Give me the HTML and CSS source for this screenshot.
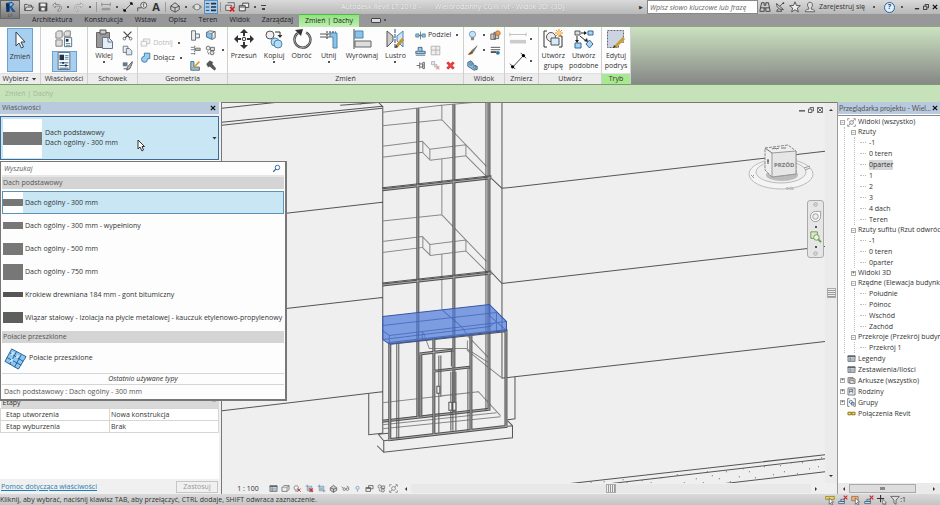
FILE: index.html
```html
<!DOCTYPE html>
<html lang="pl">
<head>
    <meta charset="UTF-8">
    <meta name="viewport" content="width=device-width, initial-scale=1.0">
    <title>Autodesk Revit LT 2018</title>
    <link rel="stylesheet" href="styles.css">
</head>
<body>
    <!-- Icon sheet -->
    <svg class="sheet" aria-hidden="true">
        <symbol id="i-open" viewBox="0 0 14 14"><path d="M2 11V4h3l1 1h4v2M2 11l2-4h8l-2 4z" fill="#ddd" stroke="#444"/></symbol>
        <symbol id="i-save" viewBox="0 0 14 14"><path d="M2.500 2.500h9v9h-9z" fill="#555" stroke="#333"/><path d="M4 3h6v3H4zM5 8h4v3H5z" fill="#eee"/></symbol>
        <symbol id="i-undo" viewBox="0 0 14 14"><path d="M5 2L2 5l3 3V6h4c2 0 2 4-1 4v2c6 0 5-8 0-8H5z" fill="#ddd" stroke="#666" stroke-width=".8"/></symbol>
        <symbol id="i-redo" viewBox="0 0 14 14"><path d="M9 2l3 3-3 3V6H5c-2 0-2 4 1 4v2C0 12 1 4 6 4h3z" fill="#ddd" stroke="#999" stroke-width=".8"/></symbol>
        <symbol id="i-meas" viewBox="0 0 14 14"><path d="M2 4h10M2 2v4M12 2v4" stroke="#888" fill="none"/><path d="M2 8h10v3H2z" fill="#999"/></symbol>
        <symbol id="i-dim" viewBox="0 0 14 14"><path d="M3 11l8-8M1 9l4 4M9 1l4 4" stroke="#444" fill="none"/><circle cx="3" cy="11" r="1.500"/><circle cx="11" cy="3" r="1.500"/></symbol>
        <symbol id="i-tag" viewBox="0 0 14 14"><circle cx="9" cy="5" r="3.500" fill="#eee" stroke="#444"/><path d="M8 4l1-1v4M2 12V8h4" stroke="#444" fill="none"/></symbol>
        <symbol id="i-cube" viewBox="0 0 14 14"><path d="M2 6l5-4 5 4v4l-5 3-5-3z" fill="#ccc" stroke="#444"/><path d="M2 6l5 2 5-2M7 8v5" stroke="#444" fill="none"/></symbol>
        <symbol id="i-sect" viewBox="0 0 14 14"><path d="M1 7l3-3v6zM13 7l-3-3v6z" fill="#888"/><circle cx="7" cy="7" r="3.500" fill="#ddd" stroke="#777"/></symbol>
        <symbol id="i-thin" viewBox="0 0 14 14"><path d="M1 3h4M1 7h4M1 11h4" stroke="#234" fill="none"/><path d="M7 3h6M7 7h6M7 11h6" stroke="#234" stroke-width="2"/></symbol>
        <symbol id="i-closeh" viewBox="0 0 14 14"><path d="M4 2h8v6M2 5h7v6H2z" fill="#ddd" stroke="#555"/><path d="M7 7l5 5M12 7l-5 5" stroke="#d22" stroke-width="2"/></symbol>
        <symbol id="i-switch" viewBox="0 0 14 14"><path d="M5.500 2.500h7v5h-7z" fill="#eee" stroke="#333"/><path d="M1.500 5.500h7v6h-7z" fill="#eee" stroke="#333"/><path d="M2 7h6" stroke="#333"/></symbol>
        <symbol id="i-bino" viewBox="0 0 14 14"><path d="M3 2h3v3h2V2h3l2 10H8V8H6v4H1z" fill="#ccc" stroke="#333"/><path d="M2 8h4M8 8h4" stroke="#333"/></symbol>
        <symbol id="i-dish" viewBox="0 0 14 14"><path d="M3 3c0 5 3 7 8 7M3 3l8 7M7 6l4-4M5 9l-2 3h6l-1-2" fill="none" stroke="#444"/><circle cx="11" cy="2.500" r="1" fill="#444"/></symbol>
        <symbol id="i-star" viewBox="0 0 14 14"><path d="M7 1l1.700 4.200 4.500.300-3.500 2.800 1.200 4.400L7 10.200l-3.900 2.500 1.200-4.400L.800 5.500l4.500-.300z" fill="#eee" stroke="#444"/></symbol>
        <symbol id="i-user" viewBox="0 0 14 14"><path d="M1.500 12.500c0-2 2-3 4-3V8C3 5 4 1.500 7 1.500S11 5 8.500 8v1.500c2 0 4 1 4 3z" fill="#ddd" stroke="#555"/></symbol>
        <symbol id="i-x" viewBox="0 0 7 7"><path d="M1 1l5 5M6 1L1 6" stroke="#111" stroke-width="1.500"/></symbol>
        <symbol id="i-arrow" viewBox="0 0 20 20"><path d="M6 2v14l3-3 2.500 5 2-1-2.500-5h4z" fill="#fff" stroke="#345"/></symbol>
        <symbol id="i-types" viewBox="0 0 20 20"><path d="M1 3l2-2h5v7l-1 1H1zM10 3l2-2h5v6h-7zM1 11h7v7H1z" fill="#ddd" stroke="#777"/><path d="M10.500 8.500h8v10h-8z" fill="#fff" stroke="#567"/><path d="M12 10h3v3h-3z" fill="#234"/><path d="M12 15h5M12 17h5" stroke="#48a"/></symbol>
        <symbol id="i-props" viewBox="0 0 20 20"><path d="M3.500.500h13v19h-13z" fill="#f6fafd" stroke="#567"/><path d="M5 3h5v6H5z" fill="#234"/><path d="M11 4h4M11 6h4M11 8h4" stroke="#48a"/><path d="M5 12h10M5 15h10M5 18h10" stroke="#357"/><path d="M8 11h2v2H8zM11 14h2v2h-2z" fill="#135"/></symbol>
        <symbol id="i-paste" viewBox="0 0 20 20"><path d="M2.500 3.500h13v15h-13z" fill="#999" stroke="#666"/><path d="M6 1h6v4H6z" fill="#ccc" stroke="#555"/><path d="M8.500 8.500h6l4 4v7h-10z" fill="#e6eef5" stroke="#678"/><path d="M14 9v4h4" fill="none" stroke="#678"/></symbol>
        <symbol id="i-cut" viewBox="0 0 14 14"><path d="M2 2l8 8M12 2L4 10" stroke="#444" stroke-width="1.500"/><circle cx="3" cy="11" r="1.700" fill="none" stroke="#555"/><circle cx="11" cy="11" r="1.700" fill="none" stroke="#555"/></symbol>
        <symbol id="i-copy" viewBox="0 0 14 14"><path d="M1.500 1.500h6v8h-6z" fill="#eee" stroke="#567"/><path d="M5.500 4.500h4l3 3v5h-7z" fill="#dde7f0" stroke="#567"/></symbol>
        <symbol id="i-match" viewBox="0 0 14 14"><path d="M1 3h6v5H1z" fill="#678"/><path d="M2 10h6v2H2z" fill="#89a"/><path d="M13 2L7 9l-1 4 4-2 3-7z" fill="#bbb" stroke="#444"/></symbol>
        <symbol id="i-cope" viewBox="0 0 14 14"><path d="M4.500 2.500h8v6h-8z" fill="#f3f3f3" stroke="#bbb"/><path d="M1.500 5.500h7v6h-7z" fill="#f8f8f8" stroke="#bbb"/></symbol>
        <symbol id="i-join" viewBox="0 0 14 14"><path d="M5.500 1.500v4a3.800 3.800 0 1 0 4 4v-1h3v-7z" fill="#9dccee" stroke="#256a9c"/></symbol>
        <symbol id="i-geo1" viewBox="0 0 14 14"><path d="M2 1h5v4h5v5H7v3H2z" fill="#eee" stroke="#456"/><path d="M7 5v5" stroke="#456"/></symbol>
        <symbol id="i-geo2" viewBox="0 0 14 14"><path d="M2 3l7 1v8l-7-3z" fill="#8ac0e4" stroke="#357"/><path d="M2 3l4-2 7 1-4 2M13 2v8l-4 2" fill="#ddd" stroke="#555"/></symbol>
        <symbol id="i-geo3" viewBox="0 0 14 14"><path d="M1 3h5M1 6h5M1 11h5" stroke="#567"/><path d="M6 1v12" stroke="#345" stroke-dasharray="2 1"/><path d="M7 4h6v3H7z" fill="#bbb" stroke="#666"/></symbol>
        <symbol id="i-geo4" viewBox="0 0 14 14"><circle cx="4" cy="4" r="2.500" fill="#eee" stroke="#555"/><path d="M7 3h5v4H7z" fill="#ddd" stroke="#555"/><circle cx="9" cy="10" r="2.500" fill="#ddd" stroke="#555"/><path d="M3 8l2 4" stroke="#555"/></symbol>
        <symbol id="i-geo5" viewBox="0 0 14 14"><path d="M1 2v11h11V9H5V2z" fill="#9cd" stroke="#357"/><path d="M6 8l6-6" stroke="#d99a22" stroke-width="2"/><path d="M1 10h11" stroke="#c84"/></symbol>
        <symbol id="i-hammer" viewBox="0 0 14 14"><path d="M2 5l4-4 4 2-1 2 5 6-2 2-6-5-2 1z" fill="#555" stroke="#333" stroke-width=".5"/></symbol>
        <symbol id="i-move" viewBox="0 0 20 20"><path d="M10 0l4 4H6zM10 20l4-4H6zM0 10l4-4v8zM20 10l-4-4v8z" fill="#333"/><path d="M9 4h2v3H9zM9 13h2v3H9zM4 9h3v2H4zM13 9h3v2h-3z" fill="#333"/><circle cx="10" cy="10" r="1.800" fill="#eee" stroke="#333"/></symbol>
        <symbol id="i-copy2" viewBox="0 0 20 20"><circle cx="6" cy="6" r="4" fill="#eee" stroke="#555"/><circle cx="11" cy="13" r="4" fill="#b6dcf5" stroke="#4a86b0"/><circle cx="14" cy="15" r="4" fill="#b6dcf5" stroke="#4a86b0"/><path d="M11 3h5v4" fill="none" stroke="#333"/><path d="M13.500 6h5L16 9z" fill="#333"/></symbol>
        <symbol id="i-rot" viewBox="0 0 20 20"><path d="M6 4a8 8 0 1 0 8-.500" fill="none" stroke="#444" stroke-width="2.400"/><path d="M6 4a8 8 0 1 0 8-.500" fill="none" stroke="#bbb" stroke-width=".8"/><path d="M3 1l8-1-2 7z" fill="#333"/></symbol>
        <symbol id="i-trim" viewBox="0 0 20 20"><path d="M1 5h10M1 8h10" stroke="#555"/><path d="M11 4h7v15h-4V8h-3z" fill="#8cc3e8" stroke="#4a86b0"/><path d="M8 2v8M10 3h7" stroke="#333" stroke-dasharray="2 1"/></symbol>
        <symbol id="i-align" viewBox="0 0 20 20"><path d="M2 0v20" stroke="#444"/><path d="M3 2h8v7H3z" fill="#8cc3e8" stroke="#4a86b0"/><path d="M3 12h16v6H3z" fill="#ddd" stroke="#666"/></symbol>
        <symbol id="i-mirror" viewBox="0 0 20 20"><path d="M2 2l6 5v5l-6 6z" fill="#ccc" stroke="#555"/><path d="M18 2l-6 5v5l6 6z" fill="#cde7f7" stroke="#4a86b0"/><path d="M10 0v20" stroke="#248" stroke-dasharray="4 1"/><path d="M11 18l7-8" stroke="#c9922c" stroke-width="3"/><path d="M10 19l1-3 2 2z" fill="#333"/></symbol>
        <symbol id="i-split" viewBox="0 0 14 14"><path d="M1 5h4v4H1zM9 5h4v4H9z" fill="#8cc3e8" stroke="#4a7c9c"/><path d="M7 2v10M5 7h4" stroke="#567"/></symbol>
        <symbol id="i-offset" viewBox="0 0 14 14"><path d="M1 11V8h3V3h5v5h4v3z" fill="#9cc8e6" stroke="#357"/><path d="M5 8h4M1 13h12" stroke="#357"/></symbol>
        <symbol id="i-scale" viewBox="0 0 14 14"><path d="M1.500 1.500h11v11h-11z" fill="#eee" stroke="#aaa"/><path d="M1.500 6.500h6v6M7.500 1.500v5h5" fill="none" stroke="#aaa"/></symbol>
        <symbol id="i-pin" viewBox="0 0 14 14"><path d="M2 7h4M6 3v8M6 5h4v4H6M10 3h2v8h-2z" stroke="#555" fill="none"/></symbol>
        <symbol id="i-unpin" viewBox="0 0 14 14"><path d="M2 2h4v4H2zM6 6h3v3H6z" fill="#eee" stroke="#aaa"/><path d="M8 8l4 4M12 8l-4 4" stroke="#d9a0a0" stroke-width="1.500"/></symbol>
        <symbol id="i-del" viewBox="0 0 14 14"><path d="M3 3l8 8M11 3l-8 8" stroke="#b22" stroke-width="3.500"/><path d="M3 3l8 8M11 3l-8 8" stroke="#e44" stroke-width="2"/></symbol>
        <symbol id="i-bulb" viewBox="0 0 14 14"><circle cx="7" cy="5.500" r="4" fill="#c5e2f6" stroke="#5a8fb5"/><path d="M5 9h4v4H5z" fill="#888"/></symbol>
        <symbol id="i-boxes" viewBox="0 0 14 14"><path d="M1 5h6v7H1zM5 3h6v8H5z" fill="#ccc" stroke="#555"/><circle cx="10" cy="4" r="3" fill="#e8a05a" stroke="#b4622a"/></symbol>
        <symbol id="i-brush" viewBox="0 0 14 14"><path d="M13 1L6 7l2 2z" fill="#777" stroke="#444" stroke-width=".5"/><path d="M6 7L1 12c3 1 6 0 7-3z" fill="#8a5a20"/></symbol>
        <symbol id="i-lines" viewBox="0 0 14 14"><path d="M1 3h12M1 6h12" stroke="#333"/><path d="M1 9h7" stroke="#333" stroke-width="2"/><circle cx="10" cy="10" r="2.500" fill="#379"/></symbol>
        <symbol id="i-link" viewBox="0 0 14 14"><path d="M1 3l4-2 3 3v2l5 2v4l-4 1-8-5z" fill="#86b8dc" stroke="#357"/><circle cx="5" cy="5" r="1.500" fill="#eee" stroke="#357"/><circle cx="10" cy="9" r="1.500" fill="#eee" stroke="#357"/></symbol>
        <symbol id="i-ruler" viewBox="0 0 20 20"><path d="M1 5h18M1 3v4M19 3v4" stroke="#bbb"/><path d="M1 11h18v4H1z" fill="#ccc"/></symbol>
        <symbol id="i-dim2" viewBox="0 0 20 20"><path d="M4 17L16 4M1 13l6 6M13 1l6 6" stroke="#333" fill="none"/><circle cx="4" cy="16.500" r="1.800"/><circle cx="16" cy="4" r="1.800"/></symbol>
        <symbol id="i-group" viewBox="0 0 20 20"><path d="M4 2H1v16h3M16 7h3v11h-3" fill="none" stroke="#333"/><circle cx="8" cy="8" r="4.500" fill="#eee" stroke="#555"/><path d="M8 9h8v7H8z" fill="#dce9f3" stroke="#456"/><path d="M16 0v8M12 4h8M13 1l6 6M19 1l-6 6" stroke="#e38a2c"/><circle cx="16" cy="4" r="2" fill="#ffd27a"/></symbol>
        <symbol id="i-similar" viewBox="0 0 20 20"><path d="M1 2h5v4H1z" fill="#ddd" stroke="#555"/><path d="M14 2h5v4h-5zM1 14h6v5H1z" fill="#a9d4f2" stroke="#37699a"/><path d="M15.500 11l3.500 4-3.500 4-3.500-4z" fill="#a9d4f2" stroke="#37699a"/><path d="M7 4h5M3 7v5M6 7l6 5" stroke="#222"/><path d="M10 2l3 2-3 2zM1 11h4l-2 3zM10 12l4 1-1-4z" fill="#222"/></symbol>
        <symbol id="i-sketch" viewBox="0 0 20 20"><path d="M1.500 1.500h16v12h-5v5h-11z" fill="#ccd3e2" stroke="#667" stroke-dasharray="2 1"/><path d="M9 18l9-9" stroke="#c9a02c" stroke-width="3"/><path d="M7 19l1-3 2 2z" fill="#333"/></symbol>
        <symbol id="i-find" viewBox="0 0 14 14"><circle cx="8.500" cy="5.500" r="3.500" fill="none" stroke="#36a" stroke-width="1.500"/><path d="M6 8l-4 4" stroke="#36a" stroke-width="2"/></symbol>
        <symbol id="i-glass" viewBox="0 0 24 24"><path d="M8 2l15 8-8 13L1 15z" fill="#8cc6f2" stroke="#2a5f8f"/><path d="M13 5L6 18M18 8l-7 13M6 6l14 9M3 11l15 8" stroke="#2a5f8f" fill="none"/><path d="M9 5l2 1-2 3-2-1zM14 8l2 1-2 3-2-1zM8 12l2 1-2 3-2-1z" fill="#c9e6fb"/></symbol>
        <symbol id="i-views" viewBox="0 0 14 14"><circle cx="7" cy="7" r="3" fill="#eee" stroke="#666"/><path d="M1 4V1h3M10 1h3v3M13 10v3h-3M4 13H1v-3M2 12l3-3M12 2L9 5" fill="none" stroke="#666"/></symbol>
        <symbol id="i-list" viewBox="0 0 14 14"><path d="M1.500 2.500h11v9h-11z" fill="#eee" stroke="#444"/><path d="M1 3h12v2H1z" fill="#567"/><path d="M2 7.500h10M2 9.500h10M5 5v7" stroke="#678"/></symbol>
        <symbol id="i-sheets" viewBox="0 0 14 14"><path d="M1.500 2.500h8v8h-8z" fill="#ccc" stroke="#555"/><path d="M4.500 4.500h8v7h-8z" fill="#eee" stroke="#444"/><path d="M6 7h5M9 9h3" stroke="#555"/></symbol>
        <symbol id="i-fam" viewBox="0 0 14 14"><path d="M1.500 1.500h11v11h-11z" fill="#eee" stroke="#444"/><path d="M4 10V4h4v3H4M9 3v7" fill="none" stroke="#357"/></symbol>
        <symbol id="i-grp" viewBox="0 0 14 14"><path d="M4 1H1v12h3M10 1h3v12h-3" fill="none" stroke="#444"/><circle cx="6" cy="6" r="2.500" fill="#def" stroke="#357"/><path d="M7 7h4v4H7z" fill="#bcd" stroke="#357"/></symbol>
        <symbol id="i-rlink" viewBox="0 0 14 14"><path d="M1.500 5h5v4h-5zM7.500 5h5v4h-5z" fill="#f5dc6e" stroke="#8a7214" stroke-width="1.500"/></symbol>
        <symbol id="i-box" viewBox="0 0 14 14"><path d="M1.500 5.500h8v6h-8z" fill="#eee" stroke="#555"/><path d="M1.500 5.500l3-3h8l-3 3M12.500 2.500v6l-3 3" fill="#ddd" stroke="#555"/></symbol>
        <symbol id="i-sun" viewBox="0 0 14 14"><circle cx="5" cy="6" r="3.500" fill="#eee" stroke="#666"/><path d="M3 11h5" stroke="#666"/><path d="M7 7l5 5M12 7l-5 5" stroke="#b33" stroke-width="1.500"/></symbol>
        <symbol id="i-crop" viewBox="0 0 14 14"><path d="M3.500 1v9.500H13M1 3.500h9.500V13" fill="none" stroke="#579"/><path d="M4 5h6v5H4z" fill="#9bc"/></symbol>
        <symbol id="i-cropx" viewBox="0 0 14 14"><path d="M3.500 1v9.500H13M1 3.500h9.500V13" fill="none" stroke="#579"/><path d="M4 5h5v5H4z" fill="#9bc"/><path d="M7 7l5 5M12 7l-5 5" stroke="#c33" stroke-width="2"/></symbol>
        <symbol id="i-glasses" viewBox="0 0 14 14"><path d="M1 4l3 3M9 3l4 3" stroke="#555"/><circle cx="5" cy="8" r="2" fill="#eee" stroke="#555"/><circle cx="10" cy="8" r="2" fill="#eee" stroke="#555"/></symbol>
        <symbol id="i-selx" viewBox="0 0 14 14"><path d="M1 9h8v3H1zM4 6h5v3H4z" fill="#cde" stroke="#357"/><path d="M8 1l5 5M13 1L8 6" stroke="#c22" stroke-width="1.500"/></symbol>
        <symbol id="i-sel" viewBox="0 0 14 14"><path d="M1 2h9v6H1z" fill="#e6b48a" stroke="#a0602a"/><path d="M6 4v9l2-2 1 3 2-1-2-3h3z" fill="#fff" stroke="#333" stroke-width=".8"/></symbol>
        <symbol id="i-sell" viewBox="0 0 14 14"><path d="M1 2h12v4H1z" fill="#f2d667" stroke="#8a7214"/><path d="M6 4v9l2-2 1 3 2-1-2-3h3z" fill="#fff" stroke="#333" stroke-width=".8"/></symbol>
        <symbol id="i-drag" viewBox="0 0 14 14"><path d="M5 0v10M0 5h10" stroke="#333" stroke-width="1.500"/><path d="M8 6v7l2-1 1 2 1-1-1-2h2z" fill="#fff" stroke="#333" stroke-width=".8"/></symbol>
        <symbol id="i-filter" viewBox="0 0 14 14"><path d="M1 2h12L8.500 7v6l-3-2V7z" fill="#ddd" stroke="#444"/></symbol>
    </svg>

    <header class="titlebar">
        <button class="app-menu" aria-label="Menu aplikacji">
            <svg viewBox="0 0 20 20"><path d="M3 3l9-2 4 4-4 4 6 8h-5L9 10v6l-5 1z" fill="#1d5a9c"/><path d="M3 3l5 2v11l-4 1z" fill="#0c2f5c"/><path d="M9 4l4-1v3l-4 2z" fill="#8fc0e8"/></svg>
            <span>LT</span>
        </button>
        <div class="quick">
            <button aria-label="Otwórz"><svg><use href="#i-open"/></svg></button>
            <button aria-label="Zapisz"><svg><use href="#i-save"/></svg></button>
            <button aria-label="Cofnij"><svg><use href="#i-undo"/></svg></button>
            <i class="caret"></i>
            <button aria-label="Ponów"><svg><use href="#i-redo"/></svg></button>
            <i class="caret"></i>
            <i class="sep"></i>
            <button aria-label="Zmierz"><svg><use href="#i-meas"/></svg></button>
            <i class="caret"></i>
            <button aria-label="Wymiar"><svg><use href="#i-dim"/></svg></button>
            <button aria-label="Oznacz"><svg><use href="#i-tag"/></svg></button>
            <button class="letter-a">A</button>
            <i class="sep"></i>
            <button aria-label="Widok 3D"><svg><use href="#i-cube"/></svg></button>
            <i class="caret"></i>
            <button aria-label="Przekrój"><svg><use href="#i-sect"/></svg></button>
            <button class="on" aria-label="Cienkie linie"><svg><use href="#i-thin"/></svg></button>
            <i class="sep"></i>
            <button aria-label="Zamknij ukryte"><svg><use href="#i-closeh"/></svg></button>
            <button aria-label="Przełącz okna"><svg><use href="#i-switch"/></svg></button>
            <i class="caret"></i>
            <i class="caret barred"></i>
        </div>
        <div class="doc-title"><span>Autodesk Revit LT 2018 -</span><span>Wielorodzinny CGW.rvt - Widok 3D: {3D}</span></div>
        <span class="search-arrow">▶</span>
        <input class="search" type="text" aria-label="Szukaj" placeholder="Wpisz słowo kluczowe lub frazę">
        <div class="account">
            <button aria-label="Znajdź"><svg><use href="#i-bino"/></svg></button>
            <button aria-label="Komunikaty"><svg><use href="#i-dish"/></svg></button>
            <button aria-label="Ulubione"><svg><use href="#i-star"/></svg></button>
            <button class="signin"><svg><use href="#i-user"/></svg>Zarejestruj się<i class="caret"></i></button>
            <button class="help">?</button>
            <i class="caret"></i>
        </div>
        <div class="win">
            <button aria-label="Minimalizuj"><svg viewBox="0 0 7 7"><path d="M1 5.500h5" stroke="#222" stroke-width="1.500"/></svg></button>
            <button aria-label="Przywróć"><svg viewBox="0 0 7 7"><path d="M2.500 2V.500h4v4H5M.500 2.500h4v4h-4z" fill="none" stroke="#222"/></svg></button>
            <button aria-label="Zamknij"><svg><use href="#i-x"/></svg></button>
        </div>
    </header>

    <nav class="tabs">
        <a href="#">Architektura</a>
        <a href="#">Konstrukcja</a>
        <a href="#">Wstaw</a>
        <a href="#">Opisz</a>
        <a href="#">Teren</a>
        <a href="#">Widok</a>
        <a href="#">Zarządzaj</a>
        <a href="#" class="active">Zmień | Dachy</a>
        <button class="collapse" aria-label="Zwiń wstążkę"></button>
        <i class="caret"></i>
    </nav>

    <section class="ribbon">
        <div class="panel p-select">
            <div class="tools"><button class="big on"><svg><use href="#i-arrow"/></svg>Zmień</button></div>
            <h2>Wybierz <i class="caret arrow"></i></h2>
        </div>
        <div class="panel p-props">
            <div class="tools column">
                <button class="wide" aria-label="Właściwości typu"><svg><use href="#i-types"/></svg></button>
                <button class="wide on" aria-label="Właściwości"><svg><use href="#i-props"/></svg></button>
            </div>
            <h2>Właściwości</h2>
        </div>
        <div class="panel p-clip">
            <div class="tools">
                <button class="big"><svg><use href="#i-paste"/></svg>Wklej<i class="caret"></i></button>
                <div class="grid">
                    <button aria-label="Wytnij"><svg><use href="#i-cut"/></svg></button>
                    <button aria-label="Kopiuj do schowka"><svg><use href="#i-copy"/></svg></button>
                    <button aria-label="Dopasuj"><svg><use href="#i-match"/></svg></button>
                </div>
            </div>
            <h2>Schowek</h2>
        </div>
        <div class="panel p-geom">
            <div class="tools">
                <div class="stack">
                    <button class="off"><svg><use href="#i-cope"/></svg>Dotnij<i class="caret"></i></button>
                    <button><svg><use href="#i-join"/></svg>Dołącz<i class="caret"></i></button>
                </div>
                <div class="grid two">
                    <button aria-label="Połączenie"><svg><use href="#i-geo1"/></svg></button>
                    <button aria-label="Podziel powierzchnię"><svg><use href="#i-geo2"/></svg></button>
                    <button aria-label="Połączenie ścian"><svg><use href="#i-geo3"/></svg></button>
                    <button aria-label="Odłącz"><svg><use href="#i-geo4"/></svg></button>
                    <button aria-label="Maluj"><svg><use href="#i-geo5"/></svg></button>
                    <button aria-label="Wyburz"><svg><use href="#i-hammer"/></svg></button>
                </div>
                <i class="caret"></i>
            </div>
            <h2>Geometria</h2>
        </div>
        <div class="panel p-modify">
            <div class="tools">
                <button class="big"><svg><use href="#i-move"/></svg>Przesuń</button>
                <button class="big"><svg><use href="#i-copy2"/></svg>Kopiuj<i class="caret"></i></button>
                <button class="big"><svg><use href="#i-rot"/></svg>Obróć</button>
                <button class="big"><svg><use href="#i-trim"/></svg>Utnij<i class="caret"></i></button>
                <button class="big"><svg><use href="#i-align"/></svg>Wyrównaj</button>
                <button class="big"><svg><use href="#i-mirror"/></svg>Lustro<i class="caret"></i></button>
                <div class="stack">
                    <button><svg><use href="#i-split"/></svg>Podziel<i class="caret"></i></button>
                    <div class="pair">
                        <button aria-label="Odsunięcie"><svg><use href="#i-offset"/></svg></button>
                        <button aria-label="Skala"><svg><use href="#i-scale"/></svg></button>
                    </div>
                    <div class="pair">
                        <button aria-label="Przypnij"><svg><use href="#i-pin"/></svg></button>
                        <button aria-label="Odepnij"><svg><use href="#i-unpin"/></svg></button>
                        <button aria-label="Usuń"><svg><use href="#i-del"/></svg></button>
                    </div>
                </div>
            </div>
            <h2>Zmień</h2>
        </div>
        <div class="panel p-view">
            <div class="tools">
                <div class="stack">
                    <div class="pair"><button aria-label="Ukryj"><svg><use href="#i-bulb"/></svg></button><i class="caret"></i><button aria-label="Przemieść"><svg><use href="#i-boxes"/></svg></button></div>
                    <div class="pair"><button aria-label="Zastąp grafikę"><svg><use href="#i-brush"/></svg></button><i class="caret"></i><button aria-label="Rodzaj linii"><svg><use href="#i-lines"/></svg></button></div>
                    <div class="pair"><button aria-label="Połącz"><svg><use href="#i-link"/></svg></button></div>
                </div>
            </div>
            <h2>Widok</h2>
        </div>
        <div class="panel p-meas">
            <div class="tools column">
                <button class="wide" aria-label="Odległość"><svg><use href="#i-ruler"/></svg><i class="caret"></i></button>
                <button class="wide" aria-label="Wymiar wyrównany"><svg><use href="#i-dim2"/></svg><i class="caret"></i></button>
            </div>
            <h2>Zmierz</h2>
        </div>
        <div class="panel p-create">
            <div class="tools">
                <button class="big"><svg><use href="#i-group"/></svg>Utwórz<br>grupę</button>
                <button class="big"><svg><use href="#i-similar"/></svg>Utwórz<br>podobne</button>
            </div>
            <h2>Utwórz</h2>
        </div>
        <div class="panel p-mode">
            <div class="tools"><button class="big"><svg><use href="#i-sketch"/></svg>Edytuj<br>podrys</button></div>
            <h2>Tryb</h2>
        </div>
    </section>

    <div class="options">Zmień | Dachy</div>

    <main class="workspace">
        <aside class="properties">
            <h3 class="dock-title">Właściwości<button aria-label="Zamknij właściwości"><svg><use href="#i-x"/></svg></button></h3>
            <button class="type-selector">
                <span class="preview"></span>
                <span class="type-name">Dach podstawowy<br>Dach ogólny - 300 mm</span>
                <i class="caret arrow"></i>
            </button>

            <div class="type-menu">
                <label class="type-search">
                    <input type="text" placeholder="Wyszukaj" aria-label="Wyszukaj">
                    <svg><use href="#i-find"/></svg>
                </label>
                <h4>Dach podstawowy</h4>
                <ul>
                    <li><button class="selected"><i class="thumb t8"></i>Dach ogólny - 300 mm</button></li>
                    <li><button><i class="thumb t8"></i>Dach ogólny - 300 mm - wypełniony</button></li>
                    <li><button><i class="thumb t12"></i>Dach ogólny - 500 mm</button></li>
                    <li><button><i class="thumb t16"></i>Dach ogólny - 750 mm</button></li>
                    <li><button><i class="thumb t5"></i>Krokiew drewniana 184 mm - gont bitumiczny</button></li>
                    <li><button><i class="thumb t11"></i>Wiązar stałowy - Izolacja na płycie metalowej - kauczuk etylenowo-propylenowy</button></li>
                </ul>
                <h4>Połacie przeszklone</h4>
                <button class="glazing"><svg><use href="#i-glass"/></svg>Połacie przeszklone</button>
                <p class="recent">Ostatnio używane typy</p>
                <button class="last">Dach podstawowy : Dach ogólny - 300 mm</button>
            </div>

            <div class="prop-list">
                <table>
                    <thead><tr><th colspan="2">Etapy<span>⌃</span></th></tr></thead>
                    <tbody>
                        <tr><td>Etap utworzenia</td><td>Nowa konstrukcja</td></tr>
                        <tr><td>Etap wyburzenia</td><td>Brak</td></tr>
                    </tbody>
                </table>
            </div>
            <div class="prop-footer">
                <a href="#">Pomoc dotycząca właściwości</a>
                <button disabled>Zastosuj</button>
            </div>
            <svg class="pointer" viewBox="0 0 8 13"><path d="M1 1v9l2-2 2 4 1.500-1L5 7.500h2.500z" fill="#fff" stroke="#333"/></svg>
        </aside>

        <section class="view">
            <div class="view-main">
                <svg class="model" viewBox="222 102 602 381" preserveAspectRatio="xMidYMid slice" role="img" aria-label="Widok 3D budynku">
                    <!-- Wall edges -->
                    <g class="ln">
                        <path d="M222 108L278 102M222 122L382 106M222 125L382 108M340 105L382 102M360 104l4-2M378 102l5 5"/>
                        <path d="M286 213L382 202M286 308L382 297M222 410L382 391M382.500 107V433"/>
                        <path d="M368.500 393V434L382 432.500"/>
                        <path d="M501.500 102V377M501.500 188L824 151M501.500 283L824 246M501 377.500L824 341"/>
                        <path d="M491 178l10.500 10M491 272l10.500 11M514.500 376V418L507 419"/>
                        <path d="M567 483L824 454M608 483L824 458M713 484L824 471"/>
                    </g>
                    <!-- Ground hatch -->
                    <path class="dots" d="M590 482h1M603 481h1M622 479h1M626 482h1M641 480h1M650 482h1M660 477h1M683 482h1M676 474h1M695 478h1M706 471h1M718 478h1M725 471h1M738 476h1M742 468h1M754 477h1M763 466h1M772 474h1M779 465h1M783 471h1M796 473h1M801 462h1M808 468h1M814 459h1M817 466h1M820 457h1M729 481h1M702 482h1M711 475h1M748 471h1M790 462h1"/>
                    <!-- Floor interiors -->
                    <g id="floor" class="thin">
                        <path d="M382 125.500L441.500 119.500L486 166M382 146L422 141L429.500 149L465.500 144.500L486 166M422.500 141V152L382 157M422 152L430 160L465.500 155.500L488 178M429.500 149V160M465.500 144.500V155.500M441.500 158V182"/>
                    </g>
                    <use href="#floor" y="95"/>
                    <path class="thin" d="M382 112L441 105L488 101M441.500 105V119M441.500 180V214M441.500 278V309M423 332L429 348H466L488 362M467 335L488 357M467 340V350L501 377M382 402L478 391L500 415M382 424L496 412M382 428L500 416M382 420L440 413M441 395L478 391"/>
                    <!-- Curtain wall -->
                    <g class="bar">
                        <path d="M417.500 108V417M453.500 104V412M488.500 102V410"/>
                        <path d="M382 189.500L491 177.500M382 284.500L491 272.500M382 420.500L489 408.500"/>
                    </g>
                    <path class="core" d="M382 189.500L491 177.500M382 284.500L491 272.500M382 420.500L489 408.500M417.500 108V417M453.500 104V412M488.500 102V410"/>
                    <path class="ln" d="M382 187.500L491 175.500M382 282.500L491 270.500M485.500 102V410"/>
                    <!-- Entrance -->
                    <path class="slab" d="M383.500 440L512 425V437L383.500 451.500z"/>
                    <path class="ln" d="M378 433.500L383.500 440M377 445l6.500 6.500M378 433.500L388 432.500M507 420L512 425"/>
                    <g class="bar">
                        <path d="M419 353.500L453 349.500M420.500 353V416M434 370.500L469 366.500M389.500 342V440M433.500 338V434M470.500 335V430M505.500 331V426M388 439L507 425.500M388 343L507 330"/>
                    </g>
                    <path class="core" d="M419 353.500L453 349.500M420.500 353V416M434 370.500L469 366.500M389.500 342V440M433.500 338V434M470.500 335V430M505.500 331V426M388 439L507 425.500M388 343L507 330"/>
                    <path class="ln" d="M396.500 343V438M398.500 343V438M438.500 355V432M440.500 355V396M450.500 371V430M452.500 371V430M455.500 371V430M467.500 368V430M451 349V366"/>
                    <path class="slab" d="M436.500 385.500h3v7h-3zM448.500 401.500h3v8h-3zM452.500 401.500h3v8h-3z"/>
                    <!-- Selected roof -->
                    <path class="roof" d="M382.500 316L489 304L506 321V330L389 343.500L382.500 339z"/>
                    <path class="roof-line" d="M382.500 330L389 335L506 321M389 335V343.500M382.500 325L496 312M442 309.500L461 326L466 333M489 304V315L506 330M382.500 339L489 326L496 321M422 331V340M496 312V331"/>
                </svg>

                <div class="view-buttons">
                    <button aria-label="Minimalizuj widok"><svg viewBox="0 0 7 7"><path d="M0 4.500h7" stroke="#444" stroke-width="1.500"/></svg></button>
                    <button aria-label="Przywróć widok"><svg viewBox="0 0 7 7"><path d="M2.500 2V.500h4v4H5M.500 2.500h4v4h-4z" fill="none" stroke="#444"/></svg></button>
                    <button aria-label="Zamknij widok"><svg viewBox="0 0 7 7"><path d="M.500.500h6v6h-6zM1 1l5 5M6 1L1 6" fill="none" stroke="#555"/></svg></button>
                </div>

                <svg class="viewcube" viewBox="0 0 66 48">
                    <ellipse cx="33" cy="30" rx="32" ry="15" fill="#f4f4f4" stroke="#bbb"/>
                    <ellipse cx="33" cy="28" rx="25" ry="11" fill="#eee" stroke="#bbb"/>
                    <ellipse cx="34" cy="31" rx="16" ry="6" fill="#bbb"/>
                    <path d="M17 4L40 1l8 6v23l-24 3-7-7z" fill="#eee" stroke="#888" stroke-dasharray="3 1"/>
                    <path d="M24 9l24-2v23l-24 3z" fill="#e6e6e6" stroke="#999"/>
                    <path d="M17 4l7 5" stroke="#777"/>
                    <path d="M24 5l3-1 1 1 3-1M33 4h5" stroke="#777" fill="none"/>
                    <path d="M20 15v5M19 17h2" stroke="#555"/>
                    <text x="26" y="23" class="cube-front">PRZÓD</text>
                    <text x="38" y="46" class="cube-side">DÓŁ</text>
                    <path d="M3 31l3 3M4 33l2-2M56 24l6-2M57 26l5-2" stroke="#999"/>
                </svg>

                <div class="navbar">
                    <button aria-label="Zamknij pasek"><svg viewBox="0 0 14 14"><circle cx="7" cy="7" r="5" fill="none" stroke="#999" stroke-width="2"/><path d="M5 5l4 4M9 5l-4 4" stroke="#999"/></svg></button>
                    <button class="wheel" aria-label="Koło nawigacyjne"><svg viewBox="0 0 14 14"><path d="M7 1.500a5.500 5.500 0 1 0 5.500 5.500v-5.500z" fill="#f8f8f8" stroke="#999"/><circle cx="7" cy="7" r="3" fill="#eee" stroke="#999"/></svg></button>
                    <i class="caret"></i>
                    <button class="wheel" aria-label="Powiększenie"><svg viewBox="0 0 14 14"><path d="M2 2h7v7H2z" fill="#dcebd0" stroke="#6a9a4a"/><circle cx="8" cy="8" r="3" fill="#eee" stroke="#6a9a4a"/><path d="M10 10l3 3" stroke="#6a9a4a" stroke-width="2"/></svg></button>
                    <i class="caret"></i>
                    <button aria-label="Opcje paska"><svg viewBox="0 0 14 14"><circle cx="7" cy="7" r="5" fill="none" stroke="#999" stroke-width="2"/><path d="M5 6l2 3 2-3" fill="none" stroke="#999"/></svg></button>
                </div>
            </div>
            <div class="vscroll">
                <button aria-label="W górę"><i class="tri up"></i></button>
                <span class="thumb-v"></span>
                <button aria-label="W dół"><i class="tri down"></i></button>
            </div>
            <div class="view-bar">
                <button class="ratio">1 : 100</button>
                <button aria-label="Poziom szczegółowości"><svg><use href="#i-list"/></svg></button>
                <button aria-label="Styl wizualny"><svg><use href="#i-box"/></svg></button>
                <button aria-label="Ścieżka słońca"><svg><use href="#i-sun"/></svg></button>
                <button aria-label="Przytnij widok"><svg><use href="#i-cropx"/></svg></button>
                <button aria-label="Pokaż region przycięcia"><svg><use href="#i-crop"/></svg></button>
                <button aria-label="Zablokuj widok"><svg><use href="#i-cube"/></svg></button>
                <button aria-label="Tymczasowe ukrycie"><svg><use href="#i-glasses"/></svg></button>
                <button aria-label="Odkryj ukryte"><svg viewBox="0 0 14 14"><circle cx="7" cy="6" r="2.500" fill="#def" stroke="#68a"/><path d="M7 9v3" stroke="#68a"/></svg></button>
                <button aria-label="Właściwości widoku"><svg><use href="#i-switch"/></svg></button>
                <button aria-label="Model analityczny"><svg><use href="#i-geo4"/></svg></button>
                <button aria-label="Wiązania"><svg><use href="#i-views"/></svg></button>
                <button aria-label="W lewo"><i class="tri left"></i></button>
                <div class="hscroll"><span class="thumb-h"></span></div>
                <button aria-label="W prawo"><i class="tri right"></i></button>
            </div>
        </section>

        <aside class="browser">
            <h3 class="dock-title"><span>Przeglądarka projektu - Wiel...</span><button aria-label="Zamknij przeglądarkę"><svg><use href="#i-x"/></svg></button></h3>
            <ul class="tree">
                <li>
                    <div class="row group"><button class="toggle" aria-label="Zwiń">−</button><svg><use href="#i-views"/></svg>Widoki (wszystko)</div>
                    <ul>
                        <li>
                            <div class="row group"><button class="toggle" aria-label="Zwiń">−</button>Rzuty</div>
                            <ul class="leaves">
                                <li class="row">-1</li>
                                <li class="row">0 teren</li>
                                <li class="row"><mark>0parter</mark></li>
                                <li class="row">1</li>
                                <li class="row">2</li>
                                <li class="row">3</li>
                                <li class="row">4 dach</li>
                                <li class="row">Teren</li>
                            </ul>
                        </li>
                        <li>
                            <div class="row group"><button class="toggle" aria-label="Zwiń">−</button>Rzuty sufitu (Rzut odwrócony)</div>
                            <ul class="leaves">
                                <li class="row">-1</li>
                                <li class="row">0 teren</li>
                                <li class="row">0parter</li>
                            </ul>
                        </li>
                        <li><div class="row group"><button class="toggle" aria-label="Rozwiń">+</button>Widoki 3D</div></li>
                        <li>
                            <div class="row group"><button class="toggle" aria-label="Zwiń">−</button>Rzędne (Elewacja budynku)</div>
                            <ul class="leaves">
                                <li class="row">Południe</li>
                                <li class="row">Północ</li>
                                <li class="row">Wschód</li>
                                <li class="row">Zachód</li>
                            </ul>
                        </li>
                        <li>
                            <div class="row group"><button class="toggle" aria-label="Zwiń">−</button>Przekroje (Przekrój budynku)</div>
                            <ul class="leaves">
                                <li class="row">Przekrój 1</li>
                            </ul>
                        </li>
                    </ul>
                </li>
                <li class="row"><i class="dash"></i><svg><use href="#i-list"/></svg>Legendy</li>
                <li class="row"><i class="dash"></i><svg><use href="#i-list"/></svg>Zestawienia/Ilości</li>
                <li class="row"><button class="toggle" aria-label="Rozwiń">+</button><svg><use href="#i-sheets"/></svg>Arkusze (wszystko)</li>
                <li class="row"><button class="toggle" aria-label="Rozwiń">+</button><svg><use href="#i-fam"/></svg>Rodziny</li>
                <li class="row"><button class="toggle" aria-label="Rozwiń">+</button><svg><use href="#i-grp"/></svg>Grupy</li>
                <li class="row"><i class="dash"></i><svg><use href="#i-rlink"/></svg>Połączenia Revit</li>
            </ul>
            <div class="tree-scroll">
                <button aria-label="W lewo"><i class="tri left"></i></button>
                <span class="thumb-tree"></span>
                <button aria-label="W prawo"><i class="tri right"></i></button>
            </div>
        </aside>
    </main>

    <footer class="status">
        <span>Kliknij, aby wybrać, naciśnij klawisz TAB, aby przełączyć, CTRL dodaje, SHIFT odwraca zaznaczenie.</span>
        <div class="status-tools">
            <button aria-label="Wybierz łącza"><svg><use href="#i-sell"/></svg></button>
            <button aria-label="Wybierz podkład"><svg><use href="#i-selx"/></svg></button>
            <button aria-label="Wybierz przypięte"><svg><use href="#i-sel"/></svg></button>
            <button aria-label="Wybierz przez powierzchnię"><svg><use href="#i-selx"/></svg></button>
            <button aria-label="Przeciągnij"><svg><use href="#i-drag"/></svg></button>
            <button class="filter"><svg><use href="#i-filter"/></svg>:1</button>
        </div>
    </footer>
</body>
</html>
```

FILE: styles.css
```css
* {
    box-sizing: border-box;
}

body {
    margin: 0;
    height: 100vh;
    display: flex;
    flex-direction: column;
    overflow: hidden;
    font-family: "Open Sans", "Noto Sans", sans-serif;
    font-size: 7px;
    line-height: 10px;
    color: #333;
    background: #eee;
}

h2, h3, h4, p, ul {
    margin: 0;
    padding: 0;
    font-size: 7px;
    font-weight: normal;
    list-style: none;
}

button {
    display: flex;
    align-items: center;
    justify-content: center;
    padding: 0;
    border: none;
    background: none;
    font: inherit;
    color: inherit;
    white-space: nowrap;
}

input {
    font: inherit;
    border: none;
    outline: none;
    min-width: 0;
}

svg {
    display: block;
    flex: none;
}

.sheet {
    display: none;
}

.caret {
    display: block;
    flex: none;
    width: 8px;
    height: 2px;
    background: linear-gradient(#555, #555) center / 2px 2px no-repeat;
}

.arrow {
    width: 5px;
    height: 3px;
    margin: 0 1px 0 3px;
    background: #333;
    clip-path: polygon(0 0, 100% 0, 50% 100%);
}

/* Title bar */
.titlebar {
    display: flex;
    align-items: center;
    height: 14px;
    flex: none;
    background: linear-gradient(#dadada, #b8b8b8);
}

.app-menu {
    flex-direction: column;
    align-self: flex-start;
    width: 20px;
    height: 19px;
    background: linear-gradient(#b5b5b5, #777);
    border: 1px solid #666;
    font-size: 4px;
    line-height: 4px;
    z-index: 1;
}

.app-menu svg {
    width: 15px;
    height: 13px;
}

.quick {
    display: flex;
    align-items: center;
    padding-left: 2px;
}

.quick button {
    width: 14px;
    height: 14px;
}

.quick svg, .account svg {
    width: 12px;
    height: 12px;
}

.quick .letter-a {
    font-size: 11px;
    line-height: 14px;
    font-weight: bold;
}

.quick .on {
    background: #a9cdeb;
    border: 1px solid #5b8fc0;
}

.sep {
    width: 5px;
    height: 10px;
    background: linear-gradient(#999, #999) center / 1px 10px no-repeat;
}

.barred {
    height: 5px;
    background: linear-gradient(#444, #444) center top / 5px 1px no-repeat, linear-gradient(#444, #444) center bottom / 3px 2px no-repeat;
}

.doc-title {
    flex: 1;
    display: flex;
    justify-content: center;
    gap: 14px;
    color: #f4f4f4;
    text-shadow: 0 0 1px #999;
    white-space: nowrap;
}

.search-arrow {
    width: 8px;
    font-size: 5px;
}

.search {
    width: 111px;
    height: 14px;
    padding: 0 2px;
    border: 1px solid #888;
    background: #fff;
    font-style: italic;
}

.search::placeholder, .type-search input::placeholder {
    color: #666;
    opacity: 1;
}

.account {
    display: flex;
    align-items: center;
    gap: 3px;
    padding-left: 1px;
}

.signin {
    gap: 3px;
}

.signin .caret {
    margin-left: 2px;
}

.help {
    width: 11px;
    height: 11px;
    margin-left: 3px;
    border: 1px solid #25659c;
    border-radius: 50%;
    background: #e3f0fa;
    color: #164a7c;
    font-weight: bold;
}

.win {
    display: flex;
    gap: 3px;
    padding: 0 2px 0 8px;
}

.win svg, .view-buttons svg, .dock-title svg {
    width: 6px;
    height: 6px;
}

/* Ribbon tabs */
.tabs {
    display: flex;
    align-items: center;
    flex: none;
    height: 13px;
    padding-left: 26px;
    background: #98989b;
    border-bottom: 1px solid #8ca480;
}

.tabs a {
    padding: 1px 6px;
    color: #222;
    text-decoration: none;
    white-space: nowrap;
}

.tabs .active {
    background: linear-gradient(#8fe37d, #c0eeb2);
    border-top: 1px solid #4fb848;
}

.collapse {
    width: 10px;
    height: 5px;
    margin-left: 12px;
    border: 1px solid #444;
    border-radius: 1px;
    background: #ddd;
}

/* Ribbon */
.ribbon {
    display: flex;
    flex: none;
    height: 58px;
    border-bottom: 1px solid #7c9a6e;
    background: linear-gradient(#cbe2c0, #868886);
}

.panel {
    flex: none;
    display: flex;
    flex-direction: column;
    background: #fdfdfd;
    border-right: 1px solid #cfcfcf;
}

.panel h2 {
    display: flex;
    align-items: center;
    justify-content: center;
    height: 11px;
    background: #ececec;
    border-top: 1px solid #e0e0e0;
}

.tools {
    flex: 1;
    display: flex;
    align-items: center;
    justify-content: center;
}

.column {
    flex-direction: column;
    gap: 1px;
}

.big {
    flex-direction: column;
    justify-content: flex-start;
    align-self: stretch;
    margin: 1px 0;
    padding: 1px 2px 0;
}

.big svg {
    width: 20px;
    height: 20px;
    margin-bottom: 2px;
}

.big.on, .wide.on {
    background: #a7cff0;
    border: 1px solid #6f9fcc;
}

.wide {
    width: 25px;
    height: 21px;
}

.wide svg {
    width: 18px;
    height: 18px;
}

.grid {
    display: grid;
    grid-auto-rows: 15px;
    align-items: center;
}

.two {
    grid-template-columns: 15px 15px;
}

.grid svg, .stack svg {
    width: 11px;
    height: 11px;
}

.stack {
    display: flex;
    flex-direction: column;
    align-items: flex-start;
}

.stack button {
    height: 15px;
    gap: 2px;
    padding: 0 2px;
}

.pair {
    display: flex;
    align-items: center;
}

.off {
    color: #bbb;
}

.p-select {
    width: 41px;
}

.p-props {
    width: 47px;
}

.p-clip {
    width: 50px;
}

.p-clip .tools {
    gap: 6px;
}

.p-geom .tools {
    gap: 1px;
}

.p-geom {
    width: 90px;
}

.p-modify {
    width: 236px;
}

.p-modify .tools {
    gap: 1px;
}

.p-modify .big {
    padding: 1px 3px 0;
}

.p-modify .stack {
    margin-left: 3px;
}

.p-view {
    width: 41px;
}

.p-meas {
    width: 34px;
}

.p-create {
    width: 63px;
}

.p-mode {
    width: 29px;
}

.p-mode h2 {
    background: #a8e890;
}

.options {
    flex: none;
    height: 17px;
    padding: 4px 5px;
    background: #c6e2b8;
    color: #a5b89b;
}

/* Docked panels */
.workspace {
    flex: 1;
    display: flex;
    min-height: 0;
}

.dock-title {
    display: flex;
    align-items: center;
    justify-content: space-between;
    flex: none;
    height: 12px;
    padding: 0 3px 0 2px;
    background: #b9cade;
    color: #555;
    white-space: nowrap;
}

.properties {
    position: relative;
    z-index: 2;
    display: flex;
    flex-direction: column;
    flex: none;
    width: 222px;
    padding-right: 2px;
    background: #f0f0f0;
    border-right: 1px solid #777;
}

.type-selector {
    justify-content: flex-start;
    height: 44px;
    margin-top: 2px;
    padding: 0 0 0 2px;
    background: #c8e6f4;
    border: 1px solid #3f6a96;
    text-align: left;
}

.type-name {
    flex: 1;
    padding-left: 3px;
}

.preview {
    width: 39px;
    height: 39px;
    background: linear-gradient(#777, #777) center / 39px 13px no-repeat #fff;
}

.type-menu {
    position: absolute;
    top: 59px;
    left: 0;
    width: 287px;
    padding: 0 1px;
    background: #fdfdfd;
    border: 1px solid #777;
    border-width: 1px 2px 2px 1px;
}

.type-search {
    display: flex;
    align-items: center;
    height: 15px;
    padding: 0 3px 0 2px;
    border-bottom: 2px solid #e6e6e6;
}

.type-search input {
    flex: 1;
    padding: 0;
    background: none;
    font-style: italic;
}

.type-search svg {
    width: 9px;
    height: 9px;
}

.type-menu h4 {
    height: 12px;
    padding: 1px 1px;
    background: #d4d4d4;
    color: #555;
}

.type-menu ul {
    padding: 2px 0;
}

.type-menu button {
    justify-content: flex-start;
    width: 100%;
}

.type-menu li button {
    height: 23px;
    gap: 2px;
    border: 1px solid transparent;
}

.type-menu .selected {
    background: linear-gradient(#fff, #fff) left / 20px 100% no-repeat #c8e6f4;
    border-color: #5d93b4;
}

.thumb {
    flex: none;
    width: 20px;
    background: #777;
}

.t5 {
    height: 5px;
    background: #555;
}

.t8 {
    height: 7px;
}

.t11 {
    height: 11px;
    background: #5c5f5c;
}

.t12 {
    height: 12px;
}

.t16 {
    height: 16px;
}

.type-menu .glazing {
    height: 30px;
    gap: 2px;
    padding-left: 2px;
}

.glazing svg {
    width: 23px;
    height: 23px;
}

.recent {
    border: 1px solid #d5d5d5;
    border-width: 1px 0;
    text-align: center;
    font-style: italic;
}

.type-menu .last {
    height: 14px;
    padding-left: 2px;
    color: #555;
}

.prop-list {
    flex: 1;
    display: flex;
    flex-direction: column;
    justify-content: flex-end;
    padding-bottom: 46px;
    background: #fff;
}

.prop-list table {
    width: 100%;
    border-collapse: collapse;
    table-layout: fixed;
}

.prop-list th {
    height: 11px;
    padding: 0 2px;
    background: #d9d9d9;
    font-weight: normal;
    text-align: left;
}

.prop-list th span {
    float: right;
}

.prop-list td {
    height: 12px;
    padding: 0 1px 0 5px;
    border: 1px solid #d6d6d6;
}

.prop-list td + td {
    padding-left: 1px;
}

.prop-footer {
    display: flex;
    align-items: center;
    justify-content: space-between;
    height: 15px;
    padding: 0 1px;
}

.prop-footer a {
    color: #1f7db3;
}

.prop-footer button {
    width: 42px;
    height: 12px;
    border: 1px solid #c6c6c6;
    color: #999;
}

.pointer {
    position: absolute;
    top: 37px;
    left: 137px;
    width: 8px;
    height: 13px;
}

/* 3D view */
.view {
    flex: 1;
    min-width: 0;
    display: grid;
    grid-template-columns: 1fr 12px;
    grid-template-rows: 1fr 11px;
    background: #efefef;
    border-top: 1px solid #777;
}

.view-main {
    position: relative;
    min-height: 0;
}

.model {
    width: 100%;
    height: 100%;
}

.ln, .thin, .core, .bar, .roof-line {
    fill: none;
    stroke-width: 1;
}

.ln {
    stroke: #555;
}

.thin {
    stroke: #888;
}

.bar {
    stroke: #505050;
    stroke-width: 3;
}

.core {
    stroke: #aaa;
}

.slab {
    fill: #efefef;
    stroke: #555;
}

.dots {
    stroke: #666;
}

.roof {
    fill: #4f7bdc;
    fill-opacity: .7;
    stroke: #3557a8;
}

.roof-line {
    stroke: #3a5fb8;
    stroke-opacity: .7;
}

.view-buttons {
    position: absolute;
    top: 4px;
    right: 2px;
    display: flex;
    gap: 3px;
}

.viewcube {
    position: absolute;
    top: 41px;
    right: 11px;
    width: 66px;
    height: 48px;
}

.cube-front {
    font-size: 6px;
    font-weight: bold;
    fill: #777;
}

.cube-side {
    font-size: 4px;
    fill: #888;
}

.navbar {
    position: absolute;
    top: 97px;
    right: 1px;
    display: flex;
    flex-direction: column;
    align-items: center;
    justify-content: space-between;
    width: 17px;
    height: 58px;
    padding: 1px;
    background: #e6e6e6;
    border: 1px solid #aaa;
    border-radius: 3px;
}

.navbar svg {
    width: 5px;
    height: 5px;
}

.navbar .wheel svg {
    width: 13px;
    height: 13px;
}

.vscroll {
    display: flex;
    flex-direction: column;
    align-items: center;
    justify-content: space-between;
    padding: 4px 0;
    background: #ebebeb;
}

.thumb-v {
    width: 9px;
    height: 10px;
    border: 1px solid #aaa;
    background: repeating-linear-gradient(#eee 0 1px, #999 1px 2px);
}

.tri {
    border: 2px solid transparent;
}

.up {
    border-bottom-color: #333;
}

.down {
    border-top-color: #333;
}

.left {
    border-right-color: #333;
}

.right {
    border-left-color: #333;
}

.view-bar {
    grid-column: 1 / 3;
    display: flex;
    align-items: center;
    padding: 0 14px 0 13px;
}

.view-bar button {
    width: 12px;
}

.view-bar svg {
    width: 9px;
    height: 9px;
}

.view-bar .ratio {
    width: 32px;
    padding-right: 6px;
}

.hscroll {
    flex: 1;
    display: flex;
    justify-content: center;
    background: #e8e8e8;
}

.thumb-h {
    width: 10px;
    height: 9px;
    border: 1px solid #aaa;
    background: repeating-linear-gradient(90deg, #eee 0 1px, #999 1px 2px);
}

/* Project browser */
.browser {
    flex: none;
    display: flex;
    flex-direction: column;
    width: 103px;
    background: #fff;
    border-left: 1px solid #999;
    overflow: hidden;
}

.browser .dock-title {
    padding: 0 2px 0 1px;
    font-family: Lato, "Open Sans", sans-serif;
}

.tree {
    flex: 1;
    padding: 1px 0 0 2px;
    margin-top: 1px;
    border-top: 1px solid #888;
}

.tree ul {
    margin-left: 4px;
    padding-left: 6px;
    border-left: 1px dotted #bbb;
}

.tree .leaves {
    padding-left: 5px;
    margin-left: 3px;
}

.row {
    display: flex;
    align-items: center;
    height: 11px;
    gap: 2px;
    white-space: nowrap;
}

.group {
    height: 10px;
}

.leaves .row {
    gap: 3px;
}

.row svg {
    width: 9px;
    height: 9px;
}

.toggle {
    flex: none;
    width: 5px;
    height: 5px;
    border: 1px solid #aaa;
    background: #fff;
    font-size: 5px;
    line-height: 3px;
}

.dash {
    width: 5px;
}

.leaves .row::before {
    content: "";
    width: 6px;
    border-top: 1px dotted #bbb;
}

.row mark {
    background: #d6d6d6;
    color: inherit;
}

.tree-scroll {
    display: flex;
    align-items: center;
    height: 11px;
    padding: 0 3px;
    background: #eaeaea;
}

.thumb-tree {
    width: 67px;
    height: 9px;
    margin: 0 auto 0 4px;
    border: 1px solid #aaa;
    background: linear-gradient(90deg, #888, #888) center / 5px 3px no-repeat #ddd;
}

/* Status bar */
.status {
    display: flex;
    align-items: center;
    justify-content: space-between;
    flex: none;
    height: 11px;
    background: linear-gradient(#dadada, #c4c4c4);
    white-space: nowrap;
}

.status-tools {
    display: flex;
    gap: 3px;
    padding-right: 34px;
}

.status-tools svg {
    width: 10px;
    height: 10px;
}
```
